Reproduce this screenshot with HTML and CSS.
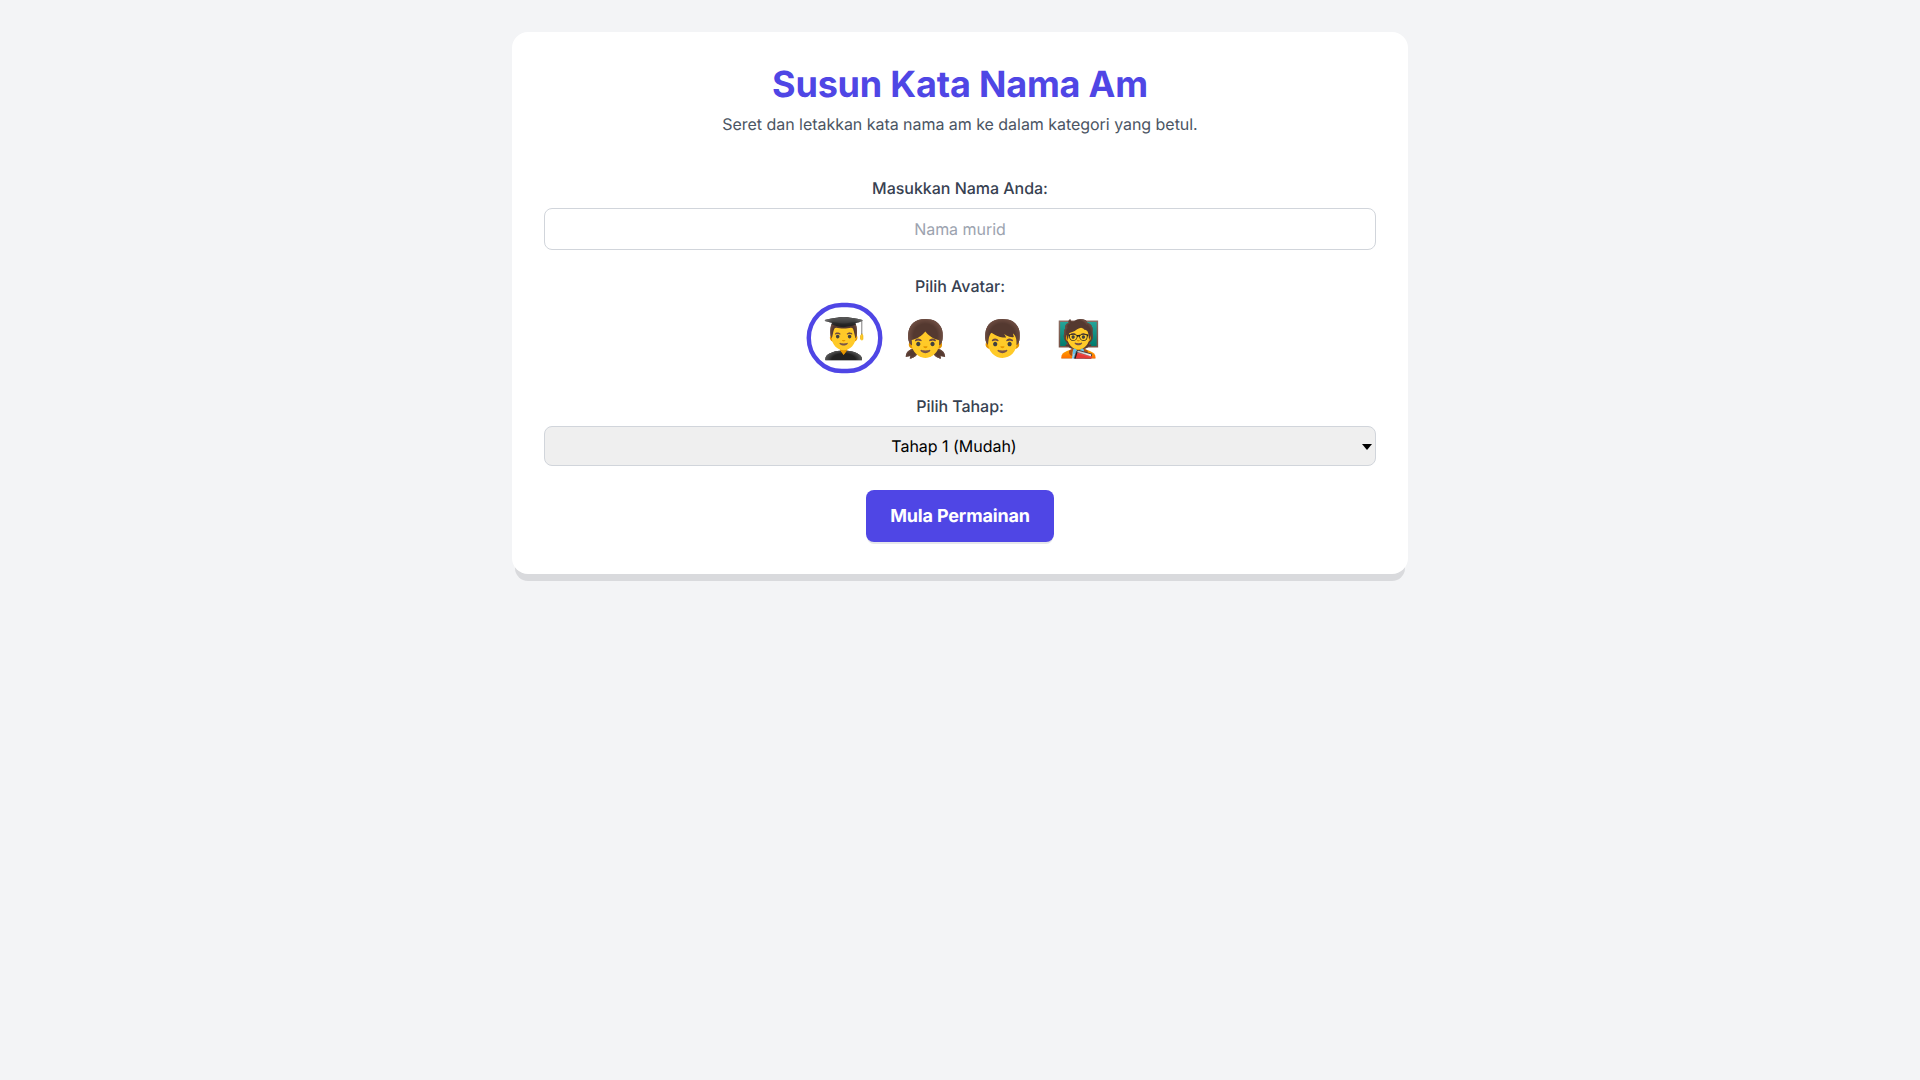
FILE: index.html
```html
<!DOCTYPE html>
<html lang="ms">
<head>
<meta charset="utf-8">
<title>Susun Kata Nama Am</title>
<link rel="stylesheet" href="styles.css">
</head>
<body>
<main class="card">
  <h1 class="title">Susun Kata Nama Am</h1>
  <p class="subtitle">Seret dan letakkan kata nama am ke dalam kategori yang betul.</p>
  <div class="field">
    <label class="label" for="name">Masukkan Nama Anda:</label>
    <input class="input" id="name" type="text" placeholder="Nama murid">
  </div>
  <div class="field">
    <span class="label">Pilih Avatar:</span>
    <div class="avatars">
      <button class="avatar selected">👨‍🎓</button>
      <button class="avatar">👧</button>
      <button class="avatar">👦</button>
      <button class="avatar">🧑‍🏫</button>
    </div>
  </div>
  <div class="field">
    <label class="label" for="level">Pilih Tahap:</label>
    <div class="select-wrap">
      <select class="select" id="level">
        <option>Tahap 1 (Mudah)</option>
        <option>Tahap 2 (Sederhana)</option>
        <option>Tahap 3 (Sukar)</option>
      </select>
    </div>
  </div>
  <button class="start">Mula Permainan</button>
</main>
</body>
</html>
```
FILE: styles.css
```css
* { box-sizing: border-box; text-rendering: geometricPrecision; }
body {
  margin: 0;
  min-height: 1080px;
  background: #f3f4f6;
  font-family: Inter, "Noto Sans", sans-serif;
  display: flex;
  flex-direction: column;
  align-items: center;
  padding-top: 32px;
}
.card {
  width: 896px;
  background: #fff;
  border-radius: 16px;
  padding: 32px;
  box-shadow: 0 10px 0 -3px #d9dadd;
  text-align: center;
}
.title {
  margin: 0 0 8px;
  font-size: 36px;
  line-height: 40px;
  font-weight: 700;
  letter-spacing: -0.2px;
  color: #4f46e5;
}
.subtitle {
  margin: 0 0 40px;
  font-size: 16px;
  line-height: 24px;
  letter-spacing: -0.04px;
  color: #4b5563;
}
.field { margin-bottom: 24px; }
.label {
  display: block;
  margin-bottom: 8px;
  font-size: 16px;
  line-height: 24px;
  font-weight: 500;
  letter-spacing: -0.03px;
  color: #374151;
}
.input {
  display: block;
  width: 100%;
  padding: 8px 16px;
  height: 42px;
  font: 16px/24px Inter, sans-serif;
  letter-spacing: -0.03px;
  text-align: center;
  border: 1px solid #d1d5db;
  border-radius: 8px;
}
.input::placeholder { color: #9ca3af; }
.avatars { display: flex; justify-content: center; align-items: center; gap: 16px; }
.avatar {
  font-size: 36px;
  line-height: 40px;
  background: none;
  border: 0;
  border-radius: 9999px;
  padding: 9px 8px 7px;
}
.avatar.selected { border: 4px solid #4f46e5; transform: scale(1.1); }
.select-wrap { position: relative; }
.select-wrap::after {
  content: "";
  position: absolute;
  right: 4px;
  top: 18px;
  border-left: 5px solid transparent;
  border-right: 5px solid transparent;
  border-top: 6px solid #000;
  pointer-events: none;
}
.select {
  display: block;
  width: 100%;
  height: 40px;
  padding: 0 12px 0 0;
  font: 16px Inter, sans-serif;
  letter-spacing: -0.03px;
  text-align: center;
  color: #000;
  background: #efefef;
  appearance: none;
  border: 1px solid #d1d5db;
  border-radius: 8px;
}
.start {
  padding: 13px 24px 11px;
  border: 0;
  border-radius: 8px;
  background: #4f46e5;
  color: #fff;
  font: 700 18px/28px Inter, sans-serif;
  letter-spacing: -0.17px;
  box-shadow: 0 3px 0 -1px #e5e7eb;
}
```
